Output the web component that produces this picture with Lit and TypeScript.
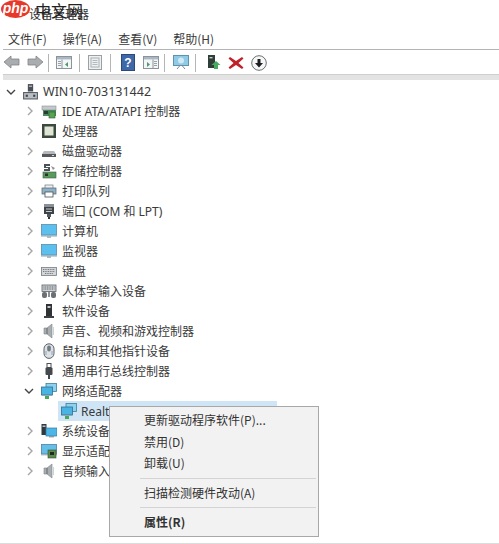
import { LitElement, html, css, svg } from "lit";
import { customElement } from "lit/decorators.js";

const icons: Record<string, any> = {
  computer: svg`<rect x="5.500" y="1" width="5" height="7" fill="#4a4f55"/><rect x="6.500" y="2.500" width="3" height="1" fill="#cfd3d6"/><rect x="1.500" y="9" width="13" height="6" fill="#b9bec4" stroke="#555c63"/><rect x="3.500" y="11" width="2" height="2" fill="#3d4348"/><rect x="10.500" y="11" width="2" height="2" fill="#3d4348"/>`,
  ide: svg`<rect x="1" y="3" width="14" height="4" fill="#c3c8cb" stroke="#8a9196" stroke-width=".6"/><rect x="2" y="7" width="13" height="6" fill="#4b8a5c"/><rect x="8" y="9" width="6" height="6" fill="#59a44f" stroke="#2f5d3a" stroke-width=".6"/><rect x="3" y="8" width="4" height="3" fill="#2b3d33"/>`,
  cpu: svg`<rect x="1" y="1" width="14" height="14" fill="#3c4a3e"/><rect x="3.500" y="3.500" width="9" height="9" fill="#dfe6d6"/>`,
  disk: svg`<path d="M3 8h10l2 3v3H1v-3z" fill="#b6b9bc"/><rect x="1" y="11" width="14" height="3" fill="#55595d"/><rect x="11" y="12" width="2" height="1" fill="#d8dcdf"/>`,
  storage: svg`<path d="M3 1h6v2H5v1h4v4H3V6h4V5H3z" fill="#4c5358"/><path d="M10 3l4 2-2 2z" fill="#8b9297"/><rect x="2" y="9" width="13" height="6" fill="#5a9a5c" stroke="#3c5a44" stroke-width=".6"/><rect x="4" y="10.500" width="3" height="2.500" fill="#27352c"/>`,
  printer: svg`<rect x="4" y="2" width="8" height="4" fill="#eef1f3" stroke="#6f777d" stroke-width=".7"/><rect x="1" y="5" width="14" height="6" fill="#8fb1c6" stroke="#55626b" stroke-width=".7"/><rect x="4" y="9" width="8" height="5" fill="#fff" stroke="#4a5056" stroke-width=".8"/>`,
  port: svg`<rect x="3" y="1" width="10" height="3" fill="#8b9094"/><rect x="3" y="4" width="10" height="7" fill="#3e4347"/><rect x="5" y="5.500" width="6" height="1" fill="#c6cacc"/><rect x="5" y="8" width="6" height="1" fill="#c6cacc"/><rect x="6" y="11" width="4" height="3" fill="#555a5e"/><rect x="7" y="14" width="2" height="2" fill="#2f3336"/>`,
  monitor: svg`<rect x="0.500" y="1.500" width="15" height="10.500" fill="#5cc0ef" stroke="#5b8ba8" stroke-width=".8"/><rect x="0" y="12" width="16" height="1.600" fill="#9fb4c0"/><rect x="6" y="13.600" width="4" height="1" fill="#7f909a"/>`,
  keyboard: svg`<rect x="0.500" y="4.500" width="15" height="8" fill="#d3d6d8" stroke="#777d82" stroke-width=".8"/><path d="M2 6.500h12M2 8.500h12M4 10.500h8" stroke="#73797e" stroke-dasharray="1 .7"/>`,
  hid: svg`<rect x="1" y="2" width="14" height="6.500" fill="#cdd1d4" stroke="#5a6066" stroke-width=".8"/><path d="M2.500 4h11M2.500 6h11" stroke="#565c62" stroke-dasharray="1 .7"/><rect x="1" y="9" width="5" height="6" rx="2" fill="#6a7076"/><rect x="10" y="9" width="5" height="6" rx="2" fill="#6a7076"/><rect x="7" y="9" width="2" height="5" fill="#8b9196"/>`,
  soft: svg`<rect x="5" y="1" width="6" height="12" fill="#2f3336"/><rect x="6.500" y="3" width="3" height="2" fill="#c4c8ca"/><rect x="3" y="13" width="10" height="2" fill="#3d4145"/>`,
  sound: svg`<path d="M3 5h3l5-4v14l-5-4H3z" fill="#a9aeb1" stroke="#7e8488" stroke-width=".6"/><path d="M6 5v6" stroke="#62686c"/><rect x="12" y="4" width="1" height="8" fill="#ced2d4"/>`,
  mouse: svg`<rect x="3" y="0.800" width="10" height="14.600" rx="5" fill="#dce1e6" stroke="#5a6167"/><rect x="6.200" y="2.500" width="3.600" height="6" rx="1.800" fill="#72797f"/><path d="M5 8v4M11 8v4" stroke="#8fa6bb"/>`,
  usb: svg`<rect x="6" y="0.500" width="4" height="4" fill="#fff" stroke="#4a4f54"/><rect x="4.500" y="4.500" width="7" height="7.500" rx="1" fill="#44494d"/><rect x="7" y="12" width="2" height="4" fill="#44494d"/>`,
  net: svg`<rect x="5" y="0.500" width="10.500" height="8" fill="#8fd0ee" stroke="#3d7f9f" stroke-width=".8"/><rect x="0.500" y="4" width="11" height="8" fill="#49b3e3" stroke="#2e7091" stroke-width=".8"/><rect x="1" y="12" width="10" height="1" fill="#9aa6ad"/><rect x="4" y="13" width="4" height="3" fill="#47a85a"/>`,
  sys: svg`<rect x="0.500" y="1" width="5" height="11" fill="#2f3a40"/><rect x="1.500" y="2.500" width="3" height="1.400" fill="#c8ccce"/><rect x="5" y="5" width="11" height="8" fill="#4db6e6" stroke="#34799c" stroke-width=".7"/><rect x="8" y="13" width="5" height="1.400" fill="#8d9aa1"/>`,
  display: svg`<rect x="0.500" y="1.500" width="15" height="9.500" fill="#64bfe9" stroke="#547f99" stroke-width=".8"/><rect x="0" y="11" width="16" height="1.400" fill="#a5b3bb"/><rect x="7" y="7" width="8" height="8" fill="#5c8a4f" stroke="#35502f" stroke-width=".6"/><rect x="9" y="9" width="4" height="3" fill="#1f2a20"/>`,
};

const tools: Record<string, any> = {
  back: svg`<path d="M1 8l7-6v3h8v6H8v3z" fill="#a9adb0" stroke="#808487" stroke-width=".8"/>`,
  forward: svg`<path d="M17 8l-7-6v3H2v6h8v3z" fill="#a9adb0" stroke="#808487" stroke-width=".8"/>`,
  panelL: svg`<rect x="1.500" y="2.500" width="15" height="12" fill="#f3f5f6" stroke="#8b949a"/><rect x="2" y="3" width="14" height="2.400" fill="#a9b8c3"/><path d="M7 5.500v9" stroke="#8b949a"/><path d="M3 7.500h3M3 9.500h3M3 11.500h3" stroke="#99a2a8"/><path d="M13 8v5l-3-2.500z" fill="#4f9a6a"/>`,
  page: svg`<rect x="2.500" y="1.500" width="13" height="14" fill="#eef1f2" stroke="#9aa1a6"/><rect x="5" y="4" width="8" height="9" fill="none" stroke="#a8aeb2"/><path d="M6.500 6.500h5M6.500 8.500h5M6.500 10.500h5" stroke="#b3b8bb"/>`,
  help: svg`<rect x="2.500" y="0.500" width="13" height="16" fill="#3e68a8" stroke="#2b4a7c"/><text x="9" y="13" text-anchor="middle" font-family="Liberation Sans, sans-serif" font-weight="700" font-size="12" fill="#fff">?</text>`,
  panelR: svg`<rect x="1.500" y="2.500" width="15" height="12" fill="#f3f5f6" stroke="#8b949a"/><rect x="2" y="3" width="14" height="2.400" fill="#a9b8c3"/><path d="M11 5.500v9" stroke="#8b949a"/><path d="M12 7.500h3M12 9.500h3M12 11.500h3" stroke="#99a2a8"/><path d="M5 8v5l3-2.500z" fill="#4f9a6a"/>`,
  scan: svg`<rect x="1.500" y="1.500" width="15" height="10" fill="#8fcbe6" stroke="#5d95ae"/><circle cx="9" cy="6.500" r="3" fill="#cfe9f5"/><path d="M5 15l3-3.500h2l3 3.500" fill="none" stroke="#7d8a92"/>`,
  update: svg`<rect x="4" y="1" width="7" height="13" fill="#2f3e36"/><rect x="5.500" y="3" width="3" height="1.400" fill="#c4ccc8"/><path d="M12 7l4.500 4H14v4h-4v-4H7.500z" fill="#4aa860"/>`,
  remove: svg`<path d="M3 3l6 4L15 3l1.500 1.500L11.500 9l5 4.500L15 15l-6-4-6 4-1.500-1.500 5-4.500-5-4.500z" fill="#c0222a"/>`,
  install: svg`<circle cx="9" cy="9" r="7.300" fill="#f7f7f7" stroke="#6b6f72"/><path d="M9 13.500L5 9h2.500V5h3v4H13z" fill="#1d1f21"/>`,
};

interface Row { icon: string; label: string; open?: boolean; child?: boolean; }

const rows: Row[] = [
  { icon: "ide", label: "IDE ATA/ATAPI 控制器" },
  { icon: "cpu", label: "处理器" },
  { icon: "disk", label: "磁盘驱动器" },
  { icon: "storage", label: "存储控制器" },
  { icon: "printer", label: "打印队列" },
  { icon: "port", label: "端口 (COM 和 LPT)" },
  { icon: "monitor", label: "计算机" },
  { icon: "monitor", label: "监视器" },
  { icon: "keyboard", label: "键盘" },
  { icon: "hid", label: "人体学输入设备" },
  { icon: "soft", label: "软件设备" },
  { icon: "sound", label: "声音、视频和游戏控制器" },
  { icon: "mouse", label: "鼠标和其他指针设备" },
  { icon: "usb", label: "通用串行总线控制器" },
  { icon: "net", label: "网络适配器", open: true },
  { icon: "net", label: "Realt", child: true },
  { icon: "sys", label: "系统设备" },
  { icon: "display", label: "显示适配" },
  { icon: "sound", label: "音频输入" },
];

@customElement("app-root")
export class AppRoot extends LitElement {
  static styles = css`
    :host {
      display: block;
      position: relative;
      width: 499px;
      height: 544px;
      overflow: hidden;
      background: #fff;
      color: #3a3a3a;
      font-family: "Noto Sans", "Noto Sans CJK SC", sans-serif;
      font-size: 12px;
    }
    .title { height: 28px; display: flex; align-items: center; padding-left: 29px; position: relative; font-size: 12px; color: #333; }
    .title-over { position: absolute; left: 35px; top: -2px; font-size: 16px; color: #222; }
    .logo {
      position: absolute; left: 1px; top: 0; width: 29px; height: 18px; border-radius: 50%;
      background: #e8382a; color: #fff; font: italic 700 14px/17px "Liberation Sans", sans-serif;
      text-align: center;
    }
    .menubar { height: 22px; display: flex; align-items: center; gap: 16px; padding-left: 5px; box-sizing: border-box; border-bottom: 1px solid #b4b4b4; margin-left: 3px; font-family: "Noto Sans CJK SC", sans-serif; }
    .toolbar { height: 24px; display: flex; align-items: center; padding-left: 3px; box-sizing: border-box; padding-top: 2px; }
    .tool { width: 18px; height: 18px; display: block; }
    .toolsep { width: 1px; height: 18px; background: #b5b5b5; }
    .band { height: 6px; margin-left: 3px; background: #e3e3e3; border-top: 1px solid #cfcfcf; box-sizing: border-box; }
    .tree { display: flex; flex-direction: column; }
    .row { height: 20px; display: flex; align-items: center; white-space: nowrap; }
    .rootrow { height: 21px; padding-top: 2px; box-sizing: border-box; }
    .chev { width: 10px; height: 10px; margin-left: 25px; flex: none; margin-right: 6px; }
    .root-chev { margin-left: 6px; margin-right: 6px; }
    .open-chev { margin-left: 24px; margin-right: 7px; }
    .spacer { width: 58px; flex: none; }
    .ic { width: 16px; height: 16px; flex: none; margin-right: 5px; }
    .root-ic { width: 17px; height: 17px; margin-right: 4px; }
    .sel { background: #cfe5f5; width: 219px; height: 20px; display: flex; align-items: center; padding-left: 3px; box-sizing: border-box; overflow: hidden; }
    .sel .ic { margin-right: 4px; }
    .root-label { font-size: 12.500px; }
    .menu {
      position: absolute; left: 109px; top: 406px; width: 210px; height: 131px; box-sizing: border-box;
      background: #f2f2f2; border: 1px solid #a8a8a8; padding: 2px 2px; display: flex; flex-direction: column;
      font-family: "Noto Sans CJK SC", sans-serif;
    }
    .item { height: 21.500px; line-height: 21.500px; padding-left: 32px; white-space: nowrap; color: #333; }
    .item.b { font-weight: 700; height: 22px; line-height: 22px; }
    .sep { height: 1px; background: #d4d4d4; margin: 4px 0 3px 28px; }
    .foot { position: absolute; left: 0; right: 0; bottom: 0; height: 1px; background: #dcdcdc; }
  `;

  private chev(open = false, cls = "") {
    return html`<svg class="chev ${cls}" viewBox="0 0 10 10">
      <path d=${open ? "M1 3l4 4 4-4" : "M3 1l4 4-4 4"} fill="none"
        stroke=${open ? "#444" : "#a6a6a6"} stroke-width="1.400"/>
    </svg>`;
  }

  private ic(name: string, cls = "") {
    return html`<svg class="ic ${cls}" viewBox="0 0 16 16">${icons[name]}</svg>`;
  }

  private tool(name: string) {
    return html`<svg class="tool" viewBox="0 0 18 18">${tools[name]}</svg>`;
  }

  private gap(w: number) {
    return html`<span style="width:${w}px;flex:none"></span>`;
  }

  render() {
    return html`
      <div class="title">设备管理器<span class="title-over">中文网</span><span class="logo">php</span></div>
      <div class="menubar"><span>文件(F)</span><span>操作(A)</span><span>查看(V)</span><span>帮助(H)</span></div>
      <div class="toolbar">
        ${this.tool("back")}${this.gap(5)}${this.tool("forward")}${this.gap(4)}<span class="toolsep"></span>${this.gap(6)}
        ${this.tool("panelL")}${this.gap(6)}<span class="toolsep"></span>${this.gap(6)}
        ${this.tool("page")}${this.gap(6)}<span class="toolsep"></span>${this.gap(8)}
        ${this.tool("help")}${this.gap(5)}${this.tool("panelR")}${this.gap(4)}<span class="toolsep"></span>${this.gap(7)}
        ${this.tool("scan")}${this.gap(5)}<span class="toolsep"></span>${this.gap(8)}
        ${this.tool("update")}${this.gap(5)}${this.tool("remove")}${this.gap(5)}${this.tool("install")}
      </div>
      <div class="band"></div>
      <div class="tree">
        <div class="row rootrow">
          ${this.chev(true, "root-chev")}${this.ic("computer", "root-ic")}<span class="root-label">WIN10-703131442</span>
        </div>
        ${rows.map((r) =>
          r.child
            ? html`<div class="row"><span class="spacer"></span><div class="sel">${this.ic(r.icon)}<span>${r.label}</span></div></div>`
            : html`<div class="row">${this.chev(r.open, r.open ? "open-chev" : "")}${this.ic(r.icon)}<span>${r.label}</span></div>`
        )}
      </div>
      <div class="menu">
        <div class="item">更新驱动程序软件(P)...</div>
        <div class="item">禁用(D)</div>
        <div class="item">卸载(U)</div>
        <div class="sep"></div>
        <div class="item">扫描检测硬件改动(A)</div>
        <div class="sep"></div>
        <div class="item b">属性(R)</div>
      </div>
      <div class="foot"></div>
    `;
  }
}
